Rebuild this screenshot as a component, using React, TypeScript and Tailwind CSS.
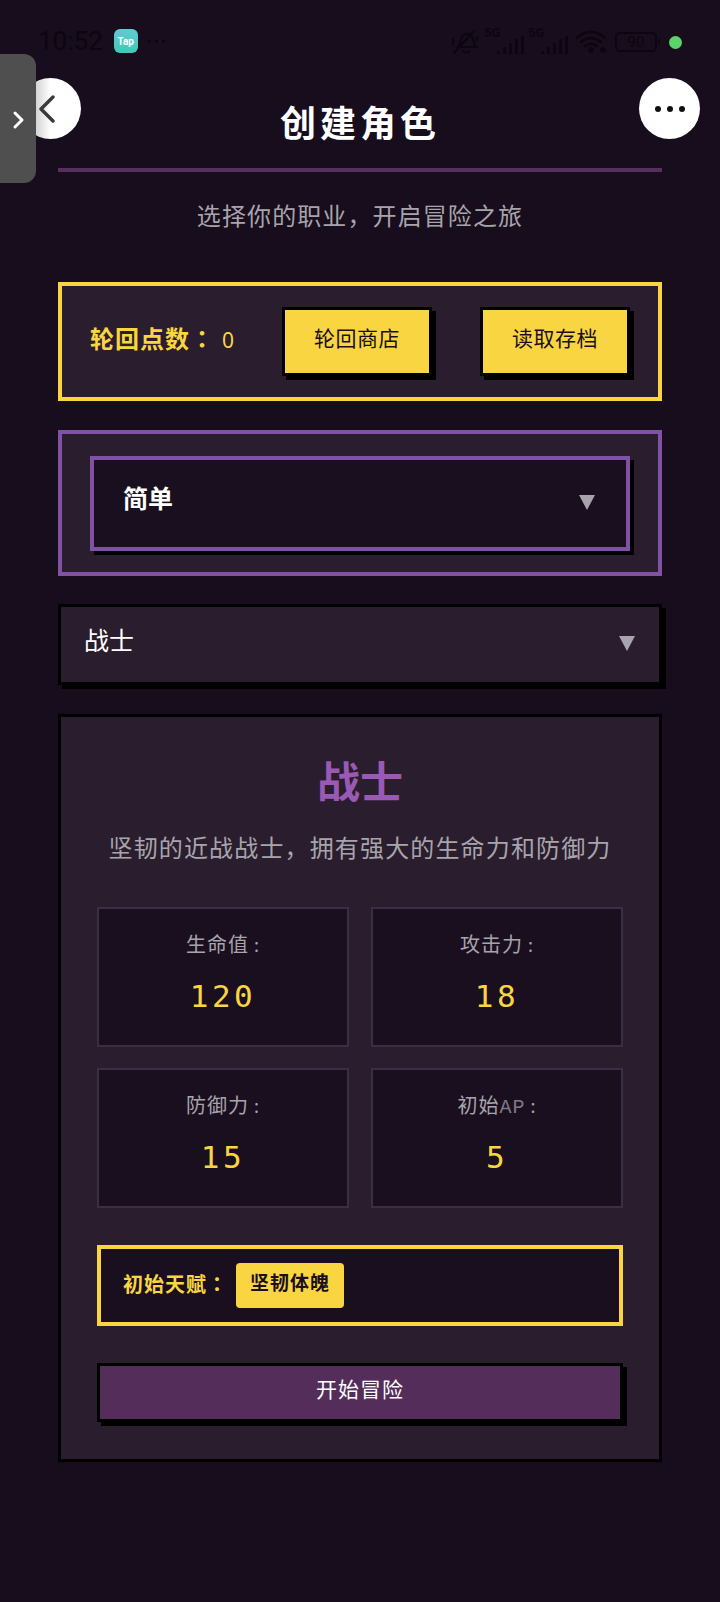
import React from 'react';

const cjk = "font-['Noto_Sans_CJK_SC','Noto_Sans',sans-serif]";
const jpColon = "font-['Noto_Sans_CJK_JP',sans-serif]";

const StatusBar: React.FC = () => (
    <div className="flex h-[78px] items-start justify-between pt-[28px] pl-[38px] pr-[38px]">
        <div className="flex items-center">
            <span className="font-['Roboto',sans-serif] text-[26px] leading-[26px] text-[#0c0610]">10:52</span>
            <span className="ml-[11px] flex h-[24px] w-[24px] items-center justify-center rounded-[6px] bg-linear-to-b from-[#5fcbd3] to-[#41c9b5] font-['Roboto',sans-serif] text-[10px] font-bold text-white">Tap</span>
            <span className="ml-[10px] flex gap-[4px]">
                <i className="h-[3px] w-[3px] rounded-full bg-[#0c0610]" />
                <i className="h-[3px] w-[3px] rounded-full bg-[#0c0610]" />
                <i className="h-[3px] w-[3px] rounded-full bg-[#0c0610]" />
            </span>
        </div>
        <div className="flex h-[28px] items-center text-[#0c0610]">
            <svg width="30" height="28" viewBox="0 0 30 28" fill="none" stroke="currentColor" strokeWidth="2.2" strokeLinecap="round">
                <path d="M8 19c2-2 2-5 3-8 1-3 3-5 6-5s5 2 6 5c1 3 1 6 3 8z" />
                <path d="M4 25 24 3M13 23c1 2 5 2 6 0M3 11v5M27 9v3" />
            </svg>
            <Signal />
            <Signal />
            <svg className="ml-[8px]" width="30" height="24" viewBox="0 0 30 24" fill="none" stroke="currentColor" strokeWidth="2.4" strokeLinecap="round">
                <path d="M1 8c8-8 20-8 28 0M5 12c6-5 14-5 20 0M9 16c4-3 8-3 12 0" />
                <circle cx="15" cy="20" r="1.6" fill="currentColor" />
                <circle cx="27" cy="20" r="1.6" />
            </svg>
            <div className="ml-[9px] flex h-[20px] w-[42px] items-center justify-center rounded-[5px] border-2 border-[#0c0610] font-['Roboto',sans-serif] text-[15px] leading-none">90</div>
            <i className="ml-[1px] h-[6px] w-[2px] rounded-r-sm bg-[#0c0610]" />
            <i className="ml-[9px] h-[13px] w-[13px] rounded-full bg-[#5cd46b]" />
        </div>
    </div>
);

const Signal: React.FC = () => (
    <div className="relative ml-[4px] flex h-[24px] w-[40px] items-end justify-end gap-[3px]">
        <span className="absolute left-0 top-[-4px] font-['Roboto',sans-serif] text-[13px] font-bold leading-none">5G</span>
        <i className="h-[3px] w-[3px] bg-[#0c0610]" />
        <i className="h-[7px] w-[3px] bg-[#0c0610]" />
        <i className="h-[11px] w-[3px] bg-[#0c0610]" />
        <i className="h-[15px] w-[3px] bg-[#0c0610]" />
        <i className="h-[18px] w-[3px] bg-[#0c0610]" />
    </div>
);

const SideTab: React.FC = () => (
    <div className="absolute left-0 top-[54px] z-10 flex h-[129px] w-[36px] items-center justify-center rounded-r-[12px] bg-[#4f4f4f] pl-[2px] pt-[2px]">
        <svg width="14" height="20" viewBox="0 0 14 20" fill="none" stroke="white" strokeWidth="3" strokeLinecap="round" strokeLinejoin="round">
            <path d="M3 3l7 7-7 7" />
        </svg>
    </div>
);

const NavButtons: React.FC = () => (
    <>
        <button className="absolute left-[20px] top-[78px] flex h-[61px] w-[61px] items-center justify-center rounded-full bg-linear-to-r from-[#a8a8a8] via-white to-white">
            <svg className="mr-[8px]" width="18" height="28" viewBox="0 0 18 28" fill="none" stroke="#3a3a3a" strokeWidth="3.4" strokeLinecap="round" strokeLinejoin="round">
                <path d="M15 2 3 14l12 12" />
            </svg>
        </button>
        <button className="absolute left-[639px] top-[78px] flex h-[61px] w-[61px] items-center justify-center gap-[6px] rounded-full bg-white">
            <i className="h-[6px] w-[6px] rounded-full bg-[#111]" />
            <i className="h-[6px] w-[6px] rounded-full bg-[#111]" />
            <i className="h-[6px] w-[6px] rounded-full bg-[#111]" />
        </button>
    </>
);

const Caret: React.FC = () => (
    <i className="mb-[3px] h-0 w-0 border-x-[8px] border-t-[15px] border-x-transparent border-t-[#a8a4ac]" />
);

const YellowButton: React.FC<{ label: string }> = ({ label }) => (
    <button className="h-[69px] w-[150px] border-[3px] border-black bg-[#f9d542] pb-[7px] text-[21px] tracking-[0.5px] text-[#1a0f1f] shadow-[4px_4px_0_#000]">
        {label}
    </button>
);

const StatCell: React.FC<{ label: React.ReactNode; value: string }> = ({ label, value }) => (
    <div className="flex h-[140px] flex-col items-center border-2 border-[#3a2d44] bg-[#1a0f1f] pt-[20px]">
        <span className="flex h-[30px] items-baseline text-[20px] leading-[30px] tracking-[1px] text-[#a8a4ac]">
            {label}
            <span className="w-[11px] text-right text-[18px]">:</span>
        </span>
        <span className="mt-[13px] font-['DejaVu_Sans_Mono',monospace] text-[31px] leading-[48px] tracking-[3.5px] text-[#f9d542]">{value}</span>
    </div>
);

const stats: { label: React.ReactNode; value: string }[] = [
    { label: '生命值', value: '120' },
    { label: '攻击力', value: '18' },
    { label: '防御力', value: '15' },
    { label: <>初始<span className="font-['Liberation_Mono',monospace] leading-none text-[#7d7882]">AP</span></>, value: '5' },
];

const App: React.FC = () => {
    return (
        <div className={`relative h-[1602px] w-[720px] overflow-hidden bg-[#170d1c] ${cjk}`}>
            <StatusBar />
            <SideTab />
            <NavButtons />
            <div className="px-[58px]">
                <h1 className="pt-[16px] text-center text-[36px] font-bold leading-[54px] tracking-[4px] text-white">创建角色</h1>
                <div className="mt-[20px] h-[4px] bg-[#57305f]" />
                <p className="mt-[25px] text-center text-[24px] leading-[36px] tracking-[1.1px] text-[#a8a4ac]">选择你的职业，开启冒险之旅</p>

                <div className="mt-[49px] flex h-[119px] items-center border-[4px] border-[#f9d542] bg-[#2a1e2e] px-[28px]">
                    <span className="pb-[8px] text-[24px] font-bold tracking-[1px] text-[#f9d542]">
                        轮回点数<span className={jpColon}>：</span>
                    </span>
                    <span className="ml-[7px] pb-[2px] font-['Noto_Sans',sans-serif] text-[21px] text-[#f9d542]">0</span>
                    <div className="ml-auto flex gap-[48px]">
                        <YellowButton label="轮回商店" />
                        <YellowButton label="读取存档" />
                    </div>
                </div>

                <div className="mt-[29px] h-[146px] border-[4px] border-[#8152a3] bg-[#2a1e2e] px-[28px] pt-[22px]">
                    <div className="flex h-[95px] items-center justify-between border-[4px] border-[#8152a3] bg-[#1a0f1f] pl-[29px] pr-[31px] shadow-[4px_4px_0_#000]">
                        <span className="pb-[12px] text-[25px] font-bold text-white">简单</span>
                        <Caret />
                    </div>
                </div>

                <div className="mt-[28px] flex h-[81px] items-center justify-between border-[3px] border-black bg-[#2a1e2e] pl-[23px] pr-[24px] shadow-[4px_4px_0_#000]">
                    <span className="pb-[10px] text-[25px] text-white">战士</span>
                    <Caret />
                </div>

                <div className="mt-[29px] h-[748px] border-[3px] border-black bg-[#2a1e2e] px-[36px] pt-[32px]">
                    <h2 className="text-center text-[43px] font-bold leading-[60px] text-[#9b59b6]">战士</h2>
                    <p className="mt-[20px] text-center text-[24px] leading-[36px] tracking-[1.15px] text-[#a8a4ac]">坚韧的近战战士，拥有强大的生命力和防御力</p>
                    <div className="mt-[42px] grid grid-cols-2 gap-[21px_22px]">
                        {stats.map((s, i) => (
                            <StatCell key={i} label={s.label} value={s.value} />
                        ))}
                    </div>
                    <div className="mt-[37px] flex h-[81px] items-center border-[4px] border-[#f9d542] bg-[#1a0f1f] pl-[22px]">
                        <span className="pb-[3px] text-[20px] font-bold tracking-[1px] text-[#f9d542]">
                            初始天赋<span className={jpColon}>：</span>
                        </span>
                        <span className="ml-[8px] flex h-[45px] w-[108px] items-center justify-center rounded-[4px] bg-[#f9d542] pb-[7px] text-[19px] font-bold tracking-[1px] text-[#1a0f1f]">坚韧体魄</span>
                    </div>
                    <button className="mt-[37px] h-[59px] w-full border-[3px] border-black bg-[#552d5a] pb-[7px] text-[21px] tracking-[1px] text-white shadow-[4px_4px_0_#000]">开始冒险</button>
                </div>
            </div>
        </div>
    );
};

export default App;
